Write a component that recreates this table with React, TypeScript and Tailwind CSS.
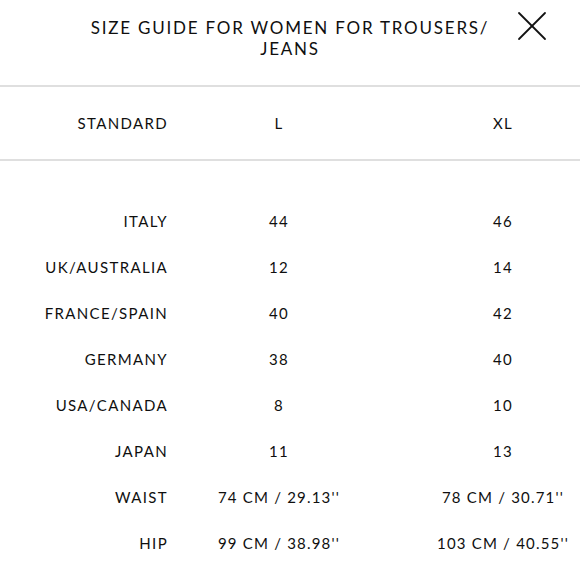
const rows: [string, string, string][] = [
  ["ITALY", "44", "46"],
  ["UK/AUSTRALIA", "12", "14"],
  ["FRANCE/SPAIN", "40", "42"],
  ["GERMANY", "38", "40"],
  ["USA/CANADA", "8", "10"],
  ["JAPAN", "11", "13"],
  ["WAIST", "74 CM / 29.13''", "78 CM / 30.71''"],
  ["HIP", "99 CM / 38.98''", "103 CM / 40.55''"],
];

export default function App() {
  return (
    <div className="relative w-[580px] h-[580px] overflow-hidden bg-white text-[#0f0f0f] font-['Lato','Liberation_Sans',sans-serif]">
      {/* Title */}
      <div className="pt-[17px] text-center text-[17px] leading-[21px] tracking-[0.105em]">
        <div>SIZE GUIDE FOR WOMEN FOR TROUSERS/</div>
        <div>JEANS</div>
      </div>
      <button className="absolute left-[517px] top-[11px] w-[30px] h-[30px]" aria-label="Close">
        <svg viewBox="0 0 30 30" width="30" height="30" fill="none" stroke="#111" strokeWidth="1.8" strokeLinecap="round">
          <line x1="2" y1="2" x2="28" y2="28" />
          <line x1="28" y1="2" x2="2" y2="28" />
        </svg>
      </button>

      <div className="mt-[26px] h-[2px] bg-[#dfdfdf]" />
      <div className="grid grid-cols-[168px_222px_1fr] h-[72px] items-center text-[15px] tracking-[0.09em]">
        <div className="text-right">STANDARD</div>
        <div className="text-center">L</div>
        <div className="text-center pl-[36px]">XL</div>
      </div>
      <div className="h-[2px] bg-[#dfdfdf]" />

      <div className="pt-[37px] text-[15px] tracking-[0.09em]">
        {rows.map(([label, l, xl]) => (
          <div key={label} className="grid grid-cols-[168px_222px_1fr] h-[46px] items-center">
            <div className="text-right">{label}</div>
            <div className="text-center whitespace-nowrap tracking-[0.08em]">{l}</div>
            <div className="text-center whitespace-nowrap tracking-[0.08em] pl-[36px]">{xl}</div>
          </div>
        ))}
      </div>
    </div>
  );
}
